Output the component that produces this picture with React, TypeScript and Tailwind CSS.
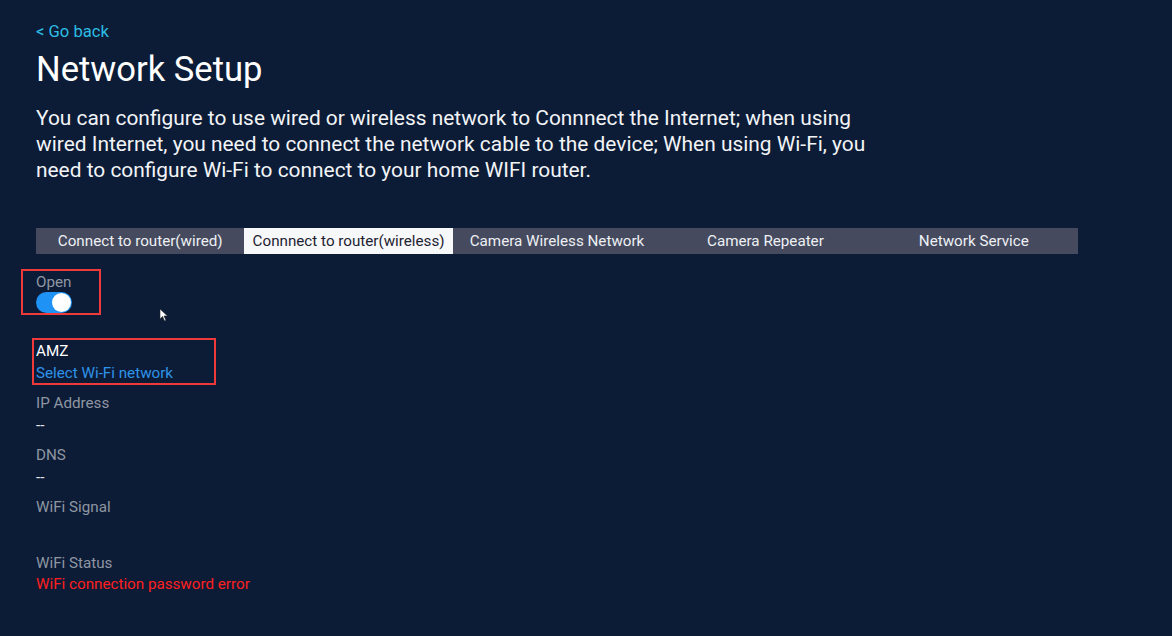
import React from "react";

const tabs = [
  "Connect to router(wired)",
  "Connnect to router(wireless)",
  "Camera Wireless Network",
  "Camera Repeater",
  "Network Service",
];

export default function App() {
  return (
    <div
      className="relative w-[1172px] h-[636px] overflow-hidden bg-[#0c1c36] pl-[36px] pt-[22px]"
      style={{ fontFamily: "Roboto, 'Noto Sans', sans-serif" }}
    >
      <div className="text-[16.6px] leading-[20px] text-[#2dbde4]">&lt; Go back</div>
      <h1 className="mt-[7px] text-[34.6px] leading-[40px] text-white">Network Setup</h1>
      <p className="mt-[16px] w-[850px] text-[20.9px] leading-[26px] text-[#f2f4f7]">
        You can configure to use wired or wireless network to Connnect the Internet; when using wired
        Internet, you need to connect the network cable to the device; When using Wi-Fi, you need to
        configure Wi-Fi to connect to your home WIFI router.
      </p>

      <div className="mt-[45px] flex h-[26px] w-[1042px] bg-[#454a5f]">
        {tabs.map((t, i) => (
          <div
            key={t}
            className={
              i === 1
                ? "flex flex-1 items-center justify-center bg-[#f7f8fa] text-[15.2px] text-[#1e2230]"
                : "flex flex-1 items-center justify-center text-[15.2px] text-[#eef0f4]"
            }
          >
            {t}
          </div>
        ))}
      </div>

      <div className="mt-[15px] -ml-[15px] h-[46px] w-[80px] border-2 border-[#f03a3a] pl-[13px] pt-[2px]">
        <div className="text-[15.2px] leading-[18px] text-[#8f96a3]">Open</div>
        <div className="mt-[1px] flex h-[21px] w-[36px] items-center justify-end rounded-full bg-[#1f93f5] pr-[1px]">
          <div className="h-[19px] w-[19px] rounded-full bg-white" />
        </div>
      </div>

      <div className="mt-[23px] -ml-[4px] h-[47px] w-[184px] border-2 border-[#f03a3a] pl-[2px] pt-[2px]">
        <div className="text-[15.2px] leading-[18px] text-white">AMZ</div>
        <div className="mt-[4px] text-[15.2px] leading-[18px] text-[#2f93ea]">Select Wi-Fi network</div>
      </div>

      <div className="mt-[9px] text-[15.2px] leading-[18px] text-[#8f96a3]">IP Address</div>
      <div className="mt-[4px] text-[15.2px] leading-[18px] text-[#e6e8ec]">--</div>
      <div className="mt-[12px] text-[15.2px] leading-[18px] text-[#8f96a3]">DNS</div>
      <div className="mt-[4px] text-[15.2px] leading-[18px] text-[#e6e8ec]">--</div>
      <div className="mt-[12px] text-[15.2px] leading-[18px] text-[#8f96a3]">WiFi Signal</div>
      <div className="mt-[38px] text-[15.2px] leading-[18px] text-[#8f96a3]">WiFi Status</div>
      <div className="mt-[3px] text-[15.2px] leading-[18px] text-[#ff1f1f]">WiFi connection password error</div>

      <svg
        className="absolute left-[159px] top-[308px]"
        width="10"
        height="14"
        viewBox="0 0 10 14"
      >
        <path d="M1 1 L1 11 L3.5 8.5 L5.5 13 L7 12.3 L5 8 L8.5 8 Z" fill="#ffffff" stroke="#222" strokeWidth="0.6" />
      </svg>
    </div>
  );
}
